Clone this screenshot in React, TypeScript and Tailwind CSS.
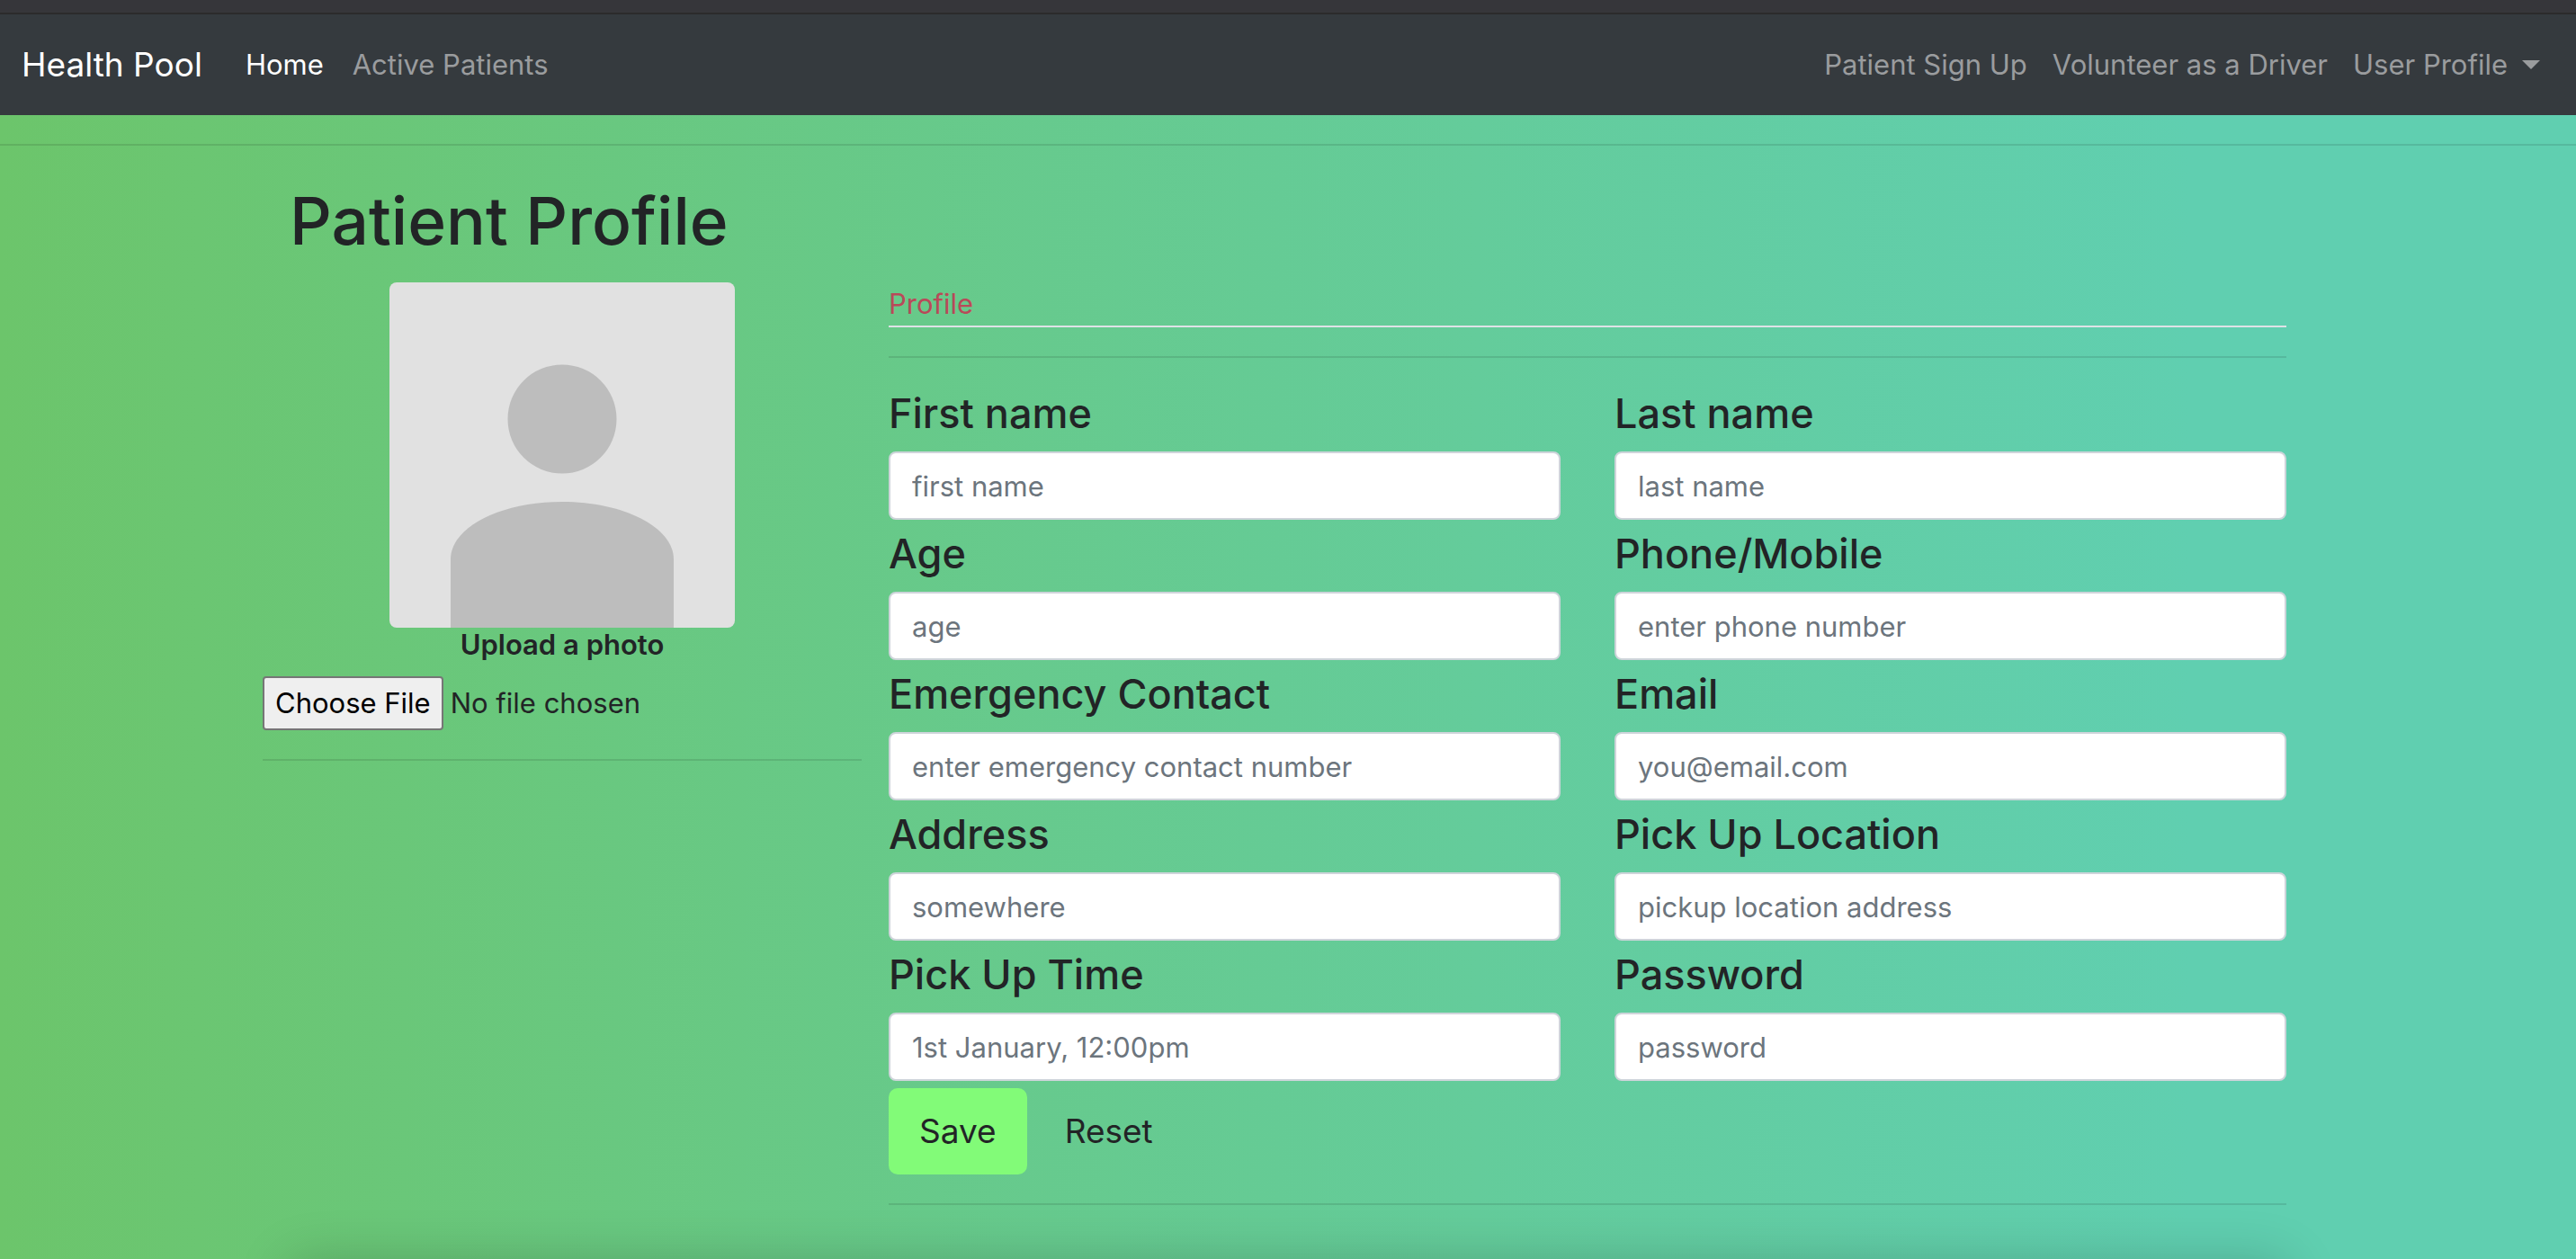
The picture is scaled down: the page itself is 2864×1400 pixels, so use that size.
import React from "react";

const fields = [
  { id: "first_name", label: "First name", type: "text", placeholder: "first name" },
  { id: "last_name", label: "Last name", type: "text", placeholder: "last name" },
  { id: "age", label: "Age", type: "text", placeholder: "age" },
  { id: "phone", label: "Phone/Mobile", type: "text", placeholder: "enter phone number" },
  { id: "emergency", label: "Emergency Contact", type: "text", placeholder: "enter emergency contact number" },
  { id: "email", label: "Email", type: "email", placeholder: "you@email.com" },
  { id: "address", label: "Address", type: "text", placeholder: "somewhere" },
  { id: "pickup_location", label: "Pick Up Location", type: "text", placeholder: "pickup location address" },
  { id: "pickup_time", label: "Pick Up Time", type: "text", placeholder: "1st January, 12:00pm" },
  { id: "password", label: "Password", type: "password", placeholder: "password" },
];

function Navbar() {
  return (
    <nav className="flex items-center border-t-2 border-[#2b2b2b] bg-[#353a3e] px-6 py-6 text-[31px] leading-[48px] text-[#9a9c9e]">
      <a href="#" className="mr-12 text-[37px] leading-[64px] text-white">Health Pool</a>
      <div className="flex flex-1 gap-8">
        <a href="#" className="text-white">Home</a>
        <a href="#">Active Patients</a>
      </div>
      <div className="flex gap-7 pr-4">
        <a href="#">Patient Sign Up</a>
        <a href="#">Volunteer as a Driver</a>
        <button type="button" className="flex items-center gap-4">
          User Profile
          <svg width="20" height="10" viewBox="0 0 20 10" fill="currentColor" aria-hidden="true">
            <path d="M0 0h20L10 10z" />
          </svg>
        </button>
      </div>
    </nav>
  );
}

function Avatar() {
  return (
    <svg className="size-96 rounded-lg" viewBox="0 0 384 384" role="img" aria-label="avatar">
      <rect width="384" height="384" fill="#e1e1e1" />
      <circle cx="192" cy="152" r="60.5" fill="#bdbdbd" />
      <path d="M68 384V308C68 272 124 244 192 244S316 272 316 308V384Z" fill="#bdbdbd" />
    </svg>
  );
}

export default function App() {
  return (
    <div className="flex min-h-screen flex-col overflow-hidden bg-linear-to-r from-[#6cc56b] to-[#60cfb0] to-85% font-['Inter',sans-serif] text-[#222426]">
      <div className="h-3.5 bg-[#36363a]" />
      <Navbar />
      <hr className="my-8 border-t-2 border-black/10" />
      <main className="mx-auto w-full max-w-[2280px] pr-[30px]">
        <h1 className="mb-4 pl-[30px] text-[73px] leading-[104px] font-medium">Patient Profile</h1>
        <div className="grid grid-cols-[3fr_7fr] gap-x-[30px]">
          <section>
            <div className="flex flex-col items-center">
              <Avatar />
              <label htmlFor="photo" className="mb-4 text-[31px] leading-[38px] font-semibold">Upload a photo</label>
            </div>
            <input
              id="photo"
              type="file"
              className="block w-full text-[31px] leading-[48px] file:mr-2 file:h-[60px] file:rounded-sm file:border-2 file:border-solid file:border-[#767676] file:bg-[#efefef] file:px-3 file:text-black"
            />
            <hr className="mt-8 border-t-2 border-black/10" />
          </section>
          <section>
            <div className="border-b-2 border-[#dee2e6] text-[31px] leading-[48px]">
              <a href="#" className="text-[#b94a59]">Profile</a>
            </div>
            <hr className="my-8 border-t-2 border-black/10" />
            <form>
              <div className="grid grid-cols-2 gap-x-[60px] gap-y-2">
                {fields.map((f) => (
                  <div key={f.id}>
                    <label htmlFor={f.id} className="mb-3 block text-[45px] leading-[60px] font-medium">{f.label}</label>
                    <input
                      id={f.id}
                      type={f.type}
                      placeholder={f.placeholder}
                      className="block h-[76px] w-full rounded-lg border-2 border-[#ced4da] bg-white px-6 text-[31px] placeholder:text-[#6c757d]"
                    />
                  </div>
                ))}
              </div>
              <div className="mt-2 flex gap-2 text-[37px] leading-[60px]">
                <button type="submit" className="h-24 rounded-[10px] bg-[#82fb78] px-[34px]">Save</button>
                <button type="reset" className="h-24 rounded-[10px] px-[34px]">Reset</button>
              </div>
            </form>
            <hr className="mt-8 border-t-2 border-black/10" />
          </section>
        </div>
      </main>
      <footer className="mx-auto mt-auto h-0 w-9/12 max-w-[2120px] shadow-[0_54px_60px_50px_rgba(0,0,0,0.2)]" />
    </div>
  );
}
